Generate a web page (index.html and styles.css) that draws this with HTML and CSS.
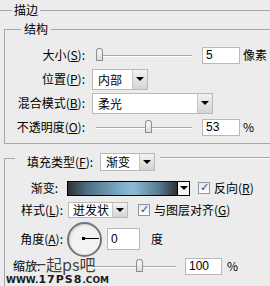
FILE: index.html
```html
<!DOCTYPE html>
<html lang="zh-CN">
<head>
    <meta charset="UTF-8">
    <title>描边</title>
    <link rel="stylesheet" href="styles.css">
</head>
<body>

<div class="panel">
    <fieldset class="outer">
        <legend>描边</legend>

        <!-- 结构 -->
        <fieldset class="group">
            <legend>结构</legend>
            <div class="row">
                <label class="lbl">大小(<u>S</u>):</label>
                <div class="slider"><span class="thumb" style="left:0px"></span></div>
                <input class="num" type="text" value="5">
                <span class="unit">像素</span>
            </div>
            <div class="row">
                <label class="lbl">位置(<u>P</u>):</label>
                <div class="select sel-pos"><span class="val">内部</span><span class="drop"></span></div>
            </div>
            <div class="row">
                <label class="lbl">混合模式(<u>B</u>):</label>
                <div class="select sel-blend"><span class="val">柔光</span><span class="drop"></span></div>
            </div>
            <div class="row">
                <label class="lbl">不透明度(<u>O</u>):</label>
                <div class="slider"><span class="thumb" style="left:49px"></span></div>
                <input class="num" type="text" value="53">
                <span class="unit">%</span>
            </div>
        </fieldset>

        <!-- 填充类型 -->
        <div class="group2">
            <div class="head">
                <span class="corner"></span>
                <label class="head-lbl">填充类型(<u>F</u>):</label>
                <div class="select sel-fill"><span class="val">渐变</span><span class="drop"></span></div>
                <span class="rule"></span>
            </div>
            <div class="body">
                <div class="row2 r-grad">
                    <label class="lbl2 lbl-grad">渐变:</label>
                    <div class="gradient"><span class="bar"></span><span class="drop dark"></span></div>
                    <span class="check on"></span>
                    <span class="check-txt">反向(<u>R</u>)</span>
                </div>
                <div class="row2 r-style">
                    <label class="lbl2">样式(<u>L</u>):</label>
                    <div class="select sel-style"><span class="val">迸发状</span><span class="drop"></span></div>
                    <span class="check on check-align"></span>
                    <span class="check-txt">与图层对齐(<u>G</u>)</span>
                </div>
                <div class="row2 r-angle">
                    <label class="lbl2">角度(<u>A</u>):</label>
                    <div class="dial"><span class="hand"></span></div>
                    <input class="num num-angle" type="text" value="0">
                    <span class="deg">度</span>
                </div>
                <div class="row2 r-scale">
                    <label class="lbl2 lbl-scale">缩放:</label>
                    <div class="slider slider-scale"><span class="thumb" style="left:62px"></span></div>
                    <input class="num num-scale" type="text" value="100">
                    <span class="unit">%</span>
                </div>
            </div>
        </div>
    </fieldset>

    <div class="watermark">
        <div class="wm-cn">一起ps吧</div>
        <div class="wm-url"><span class="small">WWW.</span>17PS8<span class="small">.COM</span></div>
    </div>
</div>

</body>
</html>
```

FILE: styles.css
```css
body {
    margin: 0;
    padding-top: 2px;
    width: 270px;
    height: 284px;
    overflow: hidden;
    background: #ececec;
    font-family: "Noto Sans CJK SC", "Liberation Sans", sans-serif;
    font-size: 12px;
    line-height: 16px;
    color: #000;
}
u {
    text-decoration: underline;
}
.panel {
    position: relative;
    height: 284px;
}

/* fieldsets */
.outer {
    margin: 0;
    padding: 0;
    border: 0;
    border-top: 1px solid #a6a6a6;
    min-width: 0;
}
.outer > legend {
    margin-left: 12px;
    padding: 0 2px;
}
.group {
    margin: 3px 0 0 4px;
    padding: 6px 0 4px 0;
    border: 1px solid #a6a6a6;
    border-right: 0;
    min-width: 0;
}
.group > legend {
    margin-left: 16px;
    padding: 0 3px;
}

/* rows */
.row {
    display: flex;
    align-items: center;
    height: 24px;
}
.lbl {
    width: 80px;
    margin-right: 7px;
    text-align: right;
    white-space: nowrap;
}

/* slider */
.slider {
    position: relative;
    width: 96px;
    height: 14px;
    margin-left: 4px;
}
.slider::before {
    content: "";
    position: absolute;
    left: 0;
    right: 0;
    top: 7px;
    border-top: 1px solid #a8a8a8;
    border-bottom: 1px solid #fff;
}
.thumb {
    position: absolute;
    top: 0;
    width: 7px;
    height: 13px;
    box-sizing: border-box;
    border: 1px solid #8d8d8d;
    border-radius: 4px 4px 1px 1px;
    background: linear-gradient(#fbfbfb, #dcdcdc);
}

/* text fields */
.num {
    box-sizing: border-box;
    width: 38px;
    height: 17px;
    margin: 0 0 0 10px;
    padding: 0 3px;
    border: 1px solid #b9b9b9;
    background: #fff;
    font-family: "Liberation Sans", sans-serif;
    font-size: 12px;
    color: #000;
    outline: none;
}
.unit {
    margin-left: 3px;
}

/* select */
.select {
    display: flex;
    box-sizing: border-box;
    height: 21px;
    border: 1px solid #b9b9b9;
    background: #fff;
}
.select .val {
    flex: 1;
    padding-left: 5px;
    line-height: 19px;
    white-space: nowrap;
}
.drop {
    position: relative;
    width: 14px;
    border-left: 1px solid #c4c4c4;
    background: linear-gradient(#f2f2f2, #d4d4d4);
}
.drop::after {
    content: "";
    position: absolute;
    left: 50%;
    top: 50%;
    margin: -2px 0 0 -4px;
    border-left: 4px solid transparent;
    border-right: 4px solid transparent;
    border-top: 4px solid #000;
}
.sel-pos {
    width: 56px;
}
.sel-blend {
    width: 121px;
}

/* second group */
.group2 {
    margin: 9px 0 0 4px;
}
.head {
    display: flex;
    align-items: center;
    height: 18px;
}
.corner {
    align-self: stretch;
    width: 10px;
    margin-top: 5px;
    border-top: 1px solid #a6a6a6;
    border-left: 1px solid #a6a6a6;
}
.head-lbl {
    width: 68px;
    margin-left: 12px;
    white-space: nowrap;
}
.sel-fill {
    width: 55px;
    height: 18px;
    margin-left: 5px;
}
.sel-fill .val {
    line-height: 16px;
}
.rule {
    flex: 1;
    align-self: flex-start;
    margin: 4px 0 0 5px;
    border-top: 1px solid #a6a6a6;
    border-bottom: 1px solid #fff;
}
.body {
    border-left: 1px solid #a6a6a6;
    height: 120px;
    padding-top: 7px;
}
.row2 {
    display: flex;
    align-items: center;
}
.lbl2 {
    width: 58px;
    text-align: right;
    white-space: nowrap;
}
.r-grad {
    height: 20px;
}
.lbl-grad {
    width: 53px;
    margin-right: 9px;
}
.gradient {
    display: flex;
    box-sizing: border-box;
    width: 123px;
    height: 15px;
    border: 1px solid #000;
}
.gradient .bar {
    flex: 1;
    background: linear-gradient(to right, #2f3335, #4e6f83 18%, #7fb0c9 50%, #8bbcd4 60%, #55758a 85%, #2c2f31);
}
.drop.dark {
    width: 11px;
    border-left: 1px solid #000;
    background: #f4f4f4;
}
.check {
    position: relative;
    box-sizing: border-box;
    width: 12px;
    height: 12px;
    margin-left: 8px;
    border: 1px solid #8a98a6;
    background: linear-gradient(#e8e8e8, #fff);
}
.check.on::after {
    content: "✓";
    position: absolute;
    left: 1px;
    top: -3px;
    font-family: "DejaVu Sans", sans-serif;
    font-size: 11px;
    font-weight: bold;
    color: #2b4a8c;
}
.check-txt {
    margin-left: 4px;
    white-space: nowrap;
}
.r-style {
    height: 24px;
}
.sel-style {
    width: 60px;
    height: 16px;
    margin-left: 5px;
}
.sel-style .val {
    line-height: 14px;
    padding-left: 4px;
}
.check-align {
    margin-left: 10px;
}
.r-angle {
    height: 34px;
}
.dial {
    position: relative;
    box-sizing: border-box;
    width: 35px;
    height: 35px;
    margin-left: 4px;
    border: 2px solid #6f7782;
    border-radius: 50%;
    background: #f2f2f2;
    box-shadow: inset 1px 1px 2px rgba(0, 0, 0, 0.15);
}
.hand {
    position: absolute;
    left: 14px;
    top: 14px;
    width: 16px;
    height: 1px;
    background: #000;
}
.hand::before {
    content: "";
    position: absolute;
    left: -1px;
    top: -1px;
    width: 3px;
    height: 3px;
    background: #000;
}
.num-angle {
    width: 33px;
    height: 22px;
    margin-left: 5px;
}
.deg {
    margin-left: 11px;
}
.r-scale {
    height: 20px;
}
.lbl-scale {
    padding-left: 8px;
    text-align: left;
}
.slider-scale {
    width: 102px;
    margin-left: 3px;
}
.num-scale {
    width: 37px;
    margin-left: 9px;
}
.r-scale .unit {
    margin-left: 5px;
}

/* watermark */
.watermark {
    position: absolute;
    left: 6px;
    top: 253px;
}
.wm-cn {
    margin-left: 24px;
    font-size: 16px;
    line-height: 18px;
    color: #3e3e3e;
    text-shadow: 0 0 1px #fff;
}
.wm-url {
    margin-top: 1px;
    font-family: "DejaVu Sans", sans-serif;
    font-weight: bold;
    font-size: 11px;
    line-height: 11px;
    letter-spacing: 1px;
    color: #1b1b1b;
}
.wm-url .small {
    font-size: 9px;
    letter-spacing: 0;
}
```
